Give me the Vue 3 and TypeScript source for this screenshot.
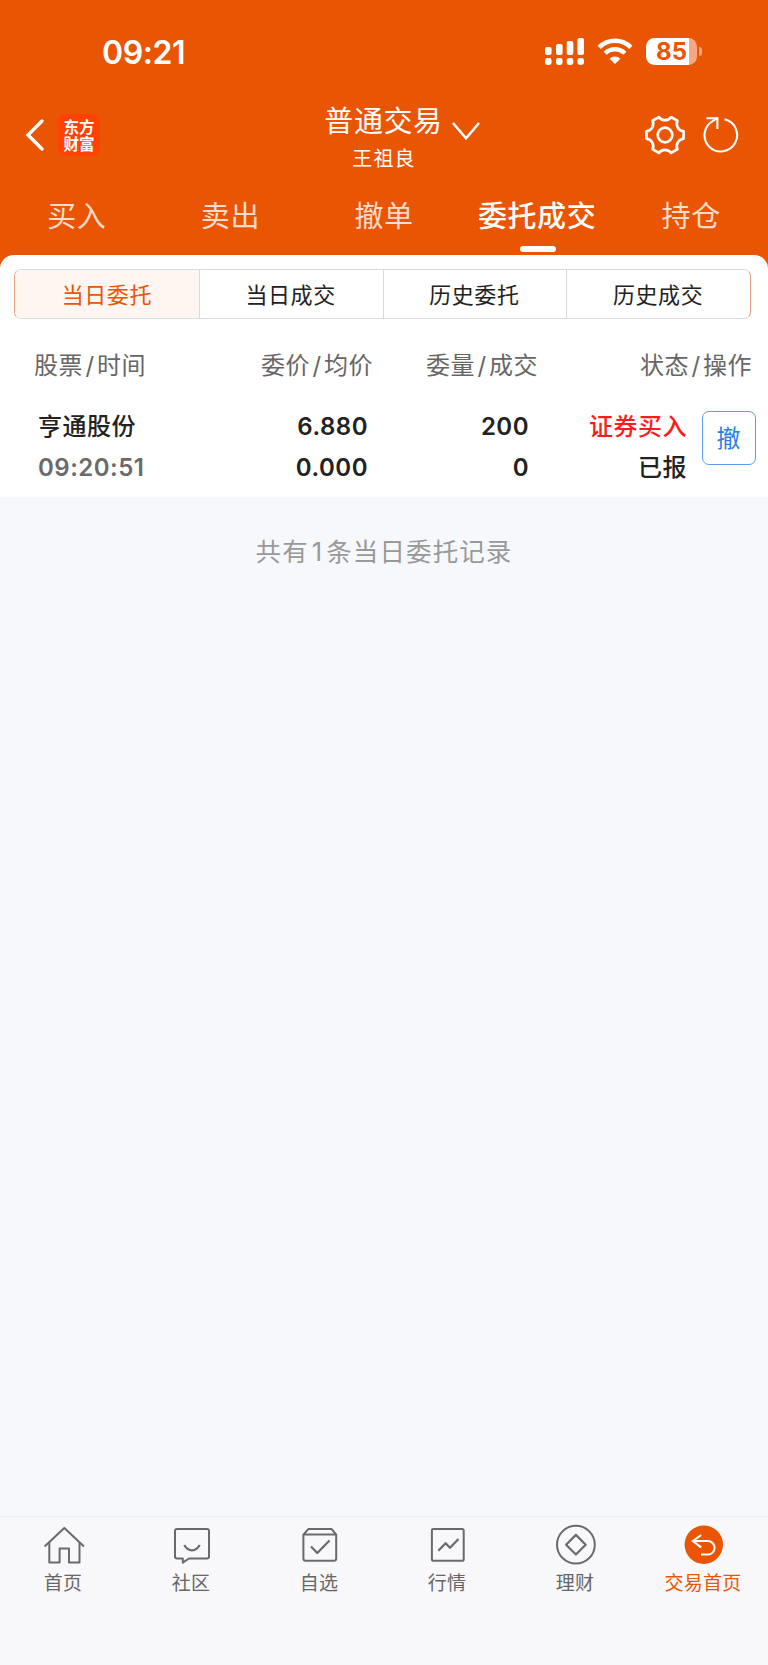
<script setup lang="ts">
interface BottomItem {
  label: string
  icon: 'home' | 'chat' | 'pick' | 'chart' | 'wealth' | 'back'
  active?: boolean
}

const tabs: string[] = ['买入', '卖出', '撤单', '委托成交', '持仓']
const activeTab = '委托成交'

const segments: string[] = ['当日委托', '当日成交', '历史委托', '历史成交']
const activeSegment = '当日委托'

const bottomItems: BottomItem[] = [
  { label: '首页', icon: 'home' },
  { label: '社区', icon: 'chat' },
  { label: '自选', icon: 'pick' },
  { label: '行情', icon: 'chart' },
  { label: '理财', icon: 'wealth' },
  { label: '交易首页', icon: 'back', active: true },
]

// Six-lobed gear outline centred on (21, 21).
function gearPath(): string {
  const point = (deg: number): string => {
    const a = (deg * Math.PI) / 180
    return `${(21 + 18.9 * Math.cos(a)).toFixed(2)} ${(21 + 18.9 * Math.sin(a)).toFixed(2)}`
  }
  let d = `M${point(-11)}`
  for (let i = 0; i < 6; i++) {
    d += ` L${point(i * 60 + 11)} A7.7 7.7 0 0 0 ${point(i * 60 + 49)}`
  }
  return d + 'Z'
}
const gear = gearPath()
</script>

<template>
  <div class="screen">
    <header class="top">
      <div class="status">
        <span class="clock">09:21</span>
        <div class="status-icons">
          <svg class="signal" width="40" height="28" viewBox="0 0 40 28" fill="#fff">
            <rect x="0" y="9" width="6.6" height="8" rx="2" />
            <rect x="11" y="6" width="6.6" height="11" rx="2" />
            <rect x="21.7" y="3" width="6.6" height="14" rx="2" />
            <rect x="32.4" y="0" width="6.6" height="17" rx="2" />
            <rect x="0" y="20" width="6.6" height="7" rx="2.4" />
            <rect x="11" y="20" width="6.6" height="7" rx="2.4" />
            <rect x="21.7" y="20" width="6.6" height="7" rx="2.4" />
            <rect x="32.4" y="20" width="6.6" height="7" rx="2.4" />
          </svg>
          <svg class="wifi" width="36" height="27" viewBox="0 0 36 27" fill="none" stroke="#fff">
            <path d="M2.2 9.3A22.5 22.5 0 0 1 33.8 9.3" stroke-width="4.6" />
            <path d="M8.2 15.2A14 14 0 0 1 27.8 15.2" stroke-width="4.4" />
            <path d="M18 26L12.6 20.7A7.7 7.7 0 0 1 23.4 20.7Z" fill="#fff" stroke="none" />
          </svg>
          <div class="battery">
            <div class="battery-body"><span>85</span></div>
            <i class="battery-cap"></i>
          </div>
        </div>
      </div>

      <div class="nav">
        <div class="nav-left">
          <svg width="20" height="34" viewBox="0 0 20 34" fill="none" stroke="#fff" stroke-width="3.4">
            <path d="M17 3L3 17L17 31" stroke-linecap="round" />
          </svg>
          <div class="brand"><span>东方</span><span>财富</span></div>
        </div>
        <div class="title">
          <h1>普通交易</h1>
          <p>王祖良</p>
          <svg class="caret" width="28" height="20" viewBox="0 0 28 20" fill="none" stroke="#fff" stroke-width="2.5">
            <path d="M1 1L14 16.3L27 1" />
          </svg>
        </div>
        <div class="nav-right">
          <svg width="42" height="42" viewBox="0 0 42 42" fill="none" stroke="#fff" stroke-width="2.7" stroke-linejoin="round">
            <path :d="gear" />
            <circle cx="21" cy="21" r="7.3" />
          </svg>
          <svg width="36" height="38" viewBox="0 0 36 38" fill="none" stroke="#fff" stroke-width="2.1">
            <path d="M21.5 4.3A16.3 16.3 0 1 1 10 5.9L14.2 3.2" />
            <path d="M3.5 3.2H14.4V14" />
          </svg>
        </div>
      </div>

      <nav class="tabs">
        <div v-for="tab in tabs" :key="tab" class="tab" :class="{ active: tab === activeTab }">
          <span>{{ tab }}</span>
        </div>
      </nav>
    </header>

    <main class="panel">
      <div class="segments">
        <div
          v-for="segment in segments"
          :key="segment"
          class="segment"
          :class="{ active: segment === activeSegment }"
        >
          {{ segment }}
        </div>
      </div>

      <div class="row head">
        <span class="c1">股票<i>/</i>时间</span>
        <span class="c2">委价<i>/</i>均价</span>
        <span class="c3">委量<i>/</i>成交</span>
        <span class="c4">状态<i>/</i>操作</span>
      </div>

      <div class="row order">
        <div class="c1"><b>亨通股份</b><b class="time">09:20:51</b></div>
        <div class="c2"><b>6.880</b><b>0.000</b></div>
        <div class="c3"><b>200</b><b>0</b></div>
        <div class="c4"><b class="buy">证券买入</b><b>已报</b></div>
        <button class="cancel">撤</button>
      </div>
    </main>

    <p class="summary">共有<span>1</span>条当日委托记录</p>

    <footer class="bottom">
      <div v-for="item in bottomItems" :key="item.label" class="item" :class="{ active: item.active }">
        <svg width="42" height="42" viewBox="0 0 42 42" fill="none" stroke="#6a6a6a" stroke-width="2" stroke-linejoin="round">
          <template v-if="item.icon === 'home'">
            <path d="M1.6 22.6L21.3 3.9L41 22.6" />
            <path d="M6.3 18.6V38.4H16.6V24.6H26V38.4H36.5V18.6" />
          </template>
          <template v-else-if="item.icon === 'chat'">
            <path d="M6 4.9H36Q38 4.9 38 6.9V32.5Q38 34.5 36 34.5H18L11.8 38.6V34.5H6Q4 34.5 4 32.5V6.9Q4 4.9 6 4.9Z" />
            <path d="M13.3 21Q16.3 26.3 21 26.3T28.7 21" stroke-width="2.2" />
          </template>
          <template v-else-if="item.icon === 'pick'">
            <path d="M9.5 4.9H32.5L37.2 10.6V34.6Q37.2 36.8 35 36.8H6.6Q4.4 36.8 4.4 34.6V10.6ZM4.4 10.6H37.2" />
            <path d="M12 22.4L18.3 29L30.5 16.6" stroke-width="2.2" />
          </template>
          <template v-else-if="item.icon === 'chart'">
            <rect x="4.9" y="4.9" width="31.8" height="31.9" rx="1.6" />
            <path d="M11.3 26.8L18.6 19.2L23 23.8L31.5 15" stroke-width="2.2" />
          </template>
          <template v-else-if="item.icon === 'wealth'">
            <circle cx="20.9" cy="20.7" r="18.9" />
            <path d="M20.9 10.9L30.7 20.7L20.9 30.5L11.1 20.7Z" stroke-width="2.2" />
          </template>
          <template v-else>
            <circle cx="20.8" cy="20.7" r="19.2" fill="#ea5504" stroke="none" />
            <path
              d="M18.2 11L9.8 17L18.2 23.4M10 17H24.8A6.8 6.8 0 0 1 24.8 30.6H18"
              stroke="#fff"
              stroke-linejoin="miter"
            />
          </template>
        </svg>
        <span>{{ item.label }}</span>
      </div>
    </footer>
  </div>
</template>

<style>
body {
  margin: 0;
  background: #f7f8fa;
}
</style>

<style scoped>
.screen {
  display: flex;
  flex-direction: column;
  width: 768px;
  height: 1665px;
  overflow: hidden;
  background: #f7f8fb;
  color: #222;
  font-family: Inter, "Noto Sans CJK SC", sans-serif;
}
h1,
p {
  margin: 0;
  font-weight: 400;
}
i {
  font-style: normal;
}

.top {
  height: 269px;
  margin-bottom: -14px;
  background: #ea5504;
  color: #fff;
}
.status {
  display: flex;
  justify-content: space-between;
  height: 100px;
  padding: 0 67px 0 102px;
}
.clock {
  margin-top: 33px;
  font-size: 32px;
  line-height: 40px;
  font-weight: 600;
  letter-spacing: -0.4px;
}
.status-icons {
  display: flex;
  align-items: flex-start;
  padding-top: 38px;
}
.wifi {
  margin: 0 13px 0 13px;
}
.signal {
  margin-right: -1px;
}
.battery {
  display: flex;
  align-items: center;
  gap: 2px;
  margin-right: -1px;
}
.battery-body {
  width: 51px;
  height: 27px;
  border-radius: 8.5px;
  background: linear-gradient(90deg, #fff 43px, #f6a884 43px);
  color: #ea5504;
  font-size: 24px;
  line-height: 28px;
  font-weight: 700;
  text-align: center;
}
.battery-cap {
  width: 3px;
  height: 9px;
  border-radius: 0 3px 3px 0;
  background: #f6a884;
}

.nav {
  display: grid;
  grid-template-columns: 1fr 120px 1fr;
  height: 90px;
}
.nav-left {
  display: flex;
  align-items: flex-start;
  padding: 14px 0 0 25px;
}
.nav-left svg {
  margin-top: 4px;
}
.brand {
  display: flex;
  flex-direction: column;
  justify-content: center;
  gap: 2px;
  width: 42px;
  height: 42px;
  margin-left: 13px;
  border-radius: 8px;
  background: #ff4203;
  font-family: "Noto Sans CJK SC", sans-serif;
  font-weight: 700;
  font-size: 15.5px;
  line-height: 15px;
  text-align: center;
}
.brand span {
  margin-top: -0.5px;
}
.title {
  position: relative;
  text-align: center;
  white-space: nowrap;
}
.title h1 {
  margin-top: 1px;
  font-size: 29px;
  line-height: 42px;
  letter-spacing: 0.6px;
  text-indent: -1px;
}
.title p {
  font-size: 20px;
  line-height: 32px;
  letter-spacing: 1.1px;
}
.caret {
  position: absolute;
  left: 128px;
  top: 22px;
}
.nav-right {
  display: flex;
  justify-content: flex-end;
  align-items: flex-start;
  gap: 17px;
  padding: 14px 29px 0 0;
}
.nav-right svg:last-child {
  margin-top: 1px;
}

.tabs {
  display: grid;
  grid-template-columns: repeat(5, 1fr);
}
.tab {
  display: flex;
  flex-direction: column;
  align-items: center;
  padding-top: 2px;
  font-size: 29px;
  line-height: 50px;
  letter-spacing: 0.6px;
  color: #fbdccb;
}
.tab.active {
  color: #fff;
  font-weight: 500;
}
.tab.active span {
  margin-right: 1px;
}
.tab.active::after {
  content: "";
  width: 36px;
  height: 6px;
  margin-top: 4px;
  border-radius: 3px;
  background: #fff;
}

.panel {
  display: flow-root;
  height: 242px;
  border-radius: 14px 14px 0 0;
  background: #fff;
}
.segments {
  display: grid;
  grid-template-columns: repeat(4, 1fr);
  width: 735px;
  height: 48px;
  margin: 14px 0 0 14px;
  border: 1px solid #d9dce0;
  border-left-color: #eaa27c;
  border-right-color: #eaa27c;
  border-radius: 7px;
  overflow: hidden;
}
.segment {
  font-size: 22px;
  line-height: 50px;
  letter-spacing: 0.6px;
  text-align: center;
}
.segment + .segment {
  border-left: 1px solid #d5d9de;
  text-indent: -1px;
}
.segment.active {
  background: #fff5f1;
  color: #ea5504;
}

.row {
  display: grid;
  grid-template-columns: 160px 213px 165px 1fr;
  text-align: right;
}
.row .c1 {
  text-align: left;
}
.head {
  margin-top: 29px;
  padding: 0 16px 0 0;
  color: #666;
  font-size: 24px;
  line-height: 36px;
  letter-spacing: 0.5px;
}
.head .c1 {
  padding-left: 34px;
}
.head i {
  margin: 0 2.4px;
}
.order {
  grid-template-columns: 160px 208px 161px 158px 69px;
  margin-top: 22px;
  font-size: 24px;
  line-height: 41px;
}
.order b {
  display: block;
  font-weight: 500;
  letter-spacing: 0.5px;
}
.order .c1 {
  padding-left: 38px;
}
.order .c2 b,
.order .c3 b,
.order .time {
  font-weight: 600;
}
.order .time {
  color: #6a6a6a;
}
.order .buy {
  color: #fb1c1c;
}
.cancel {
  width: 54px;
  height: 54px;
  margin: 5px 0 0 15px;
  padding: 0;
  border: 1.5px solid #5b9df0;
  border-radius: 7px;
  background: #fff;
  color: #2b7ee8;
  font: inherit;
  line-height: 51px;
  text-indent: -1px;
}

.summary {
  margin-top: 35px;
  color: #999;
  font-size: 25.5px;
  line-height: 40px;
  letter-spacing: 1.1px;
  text-align: center;
}
.summary span {
  margin: 0 3px;
}

.bottom {
  display: grid;
  grid-template-columns: repeat(6, 1fr);
  height: 148px;
  margin-top: auto;
  border-top: 1px solid #e9eaec;
  background: #f8f8fb;
}
.item {
  display: flex;
  flex-direction: column;
  align-items: center;
  padding-top: 7px;
  color: #666;
  font-size: 19px;
}
.item span {
  margin-top: 4px;
  margin-right: 2px;
  line-height: 27px;
  letter-spacing: 0.3px;
}
.item.active {
  color: #ea5504;
}
</style>
